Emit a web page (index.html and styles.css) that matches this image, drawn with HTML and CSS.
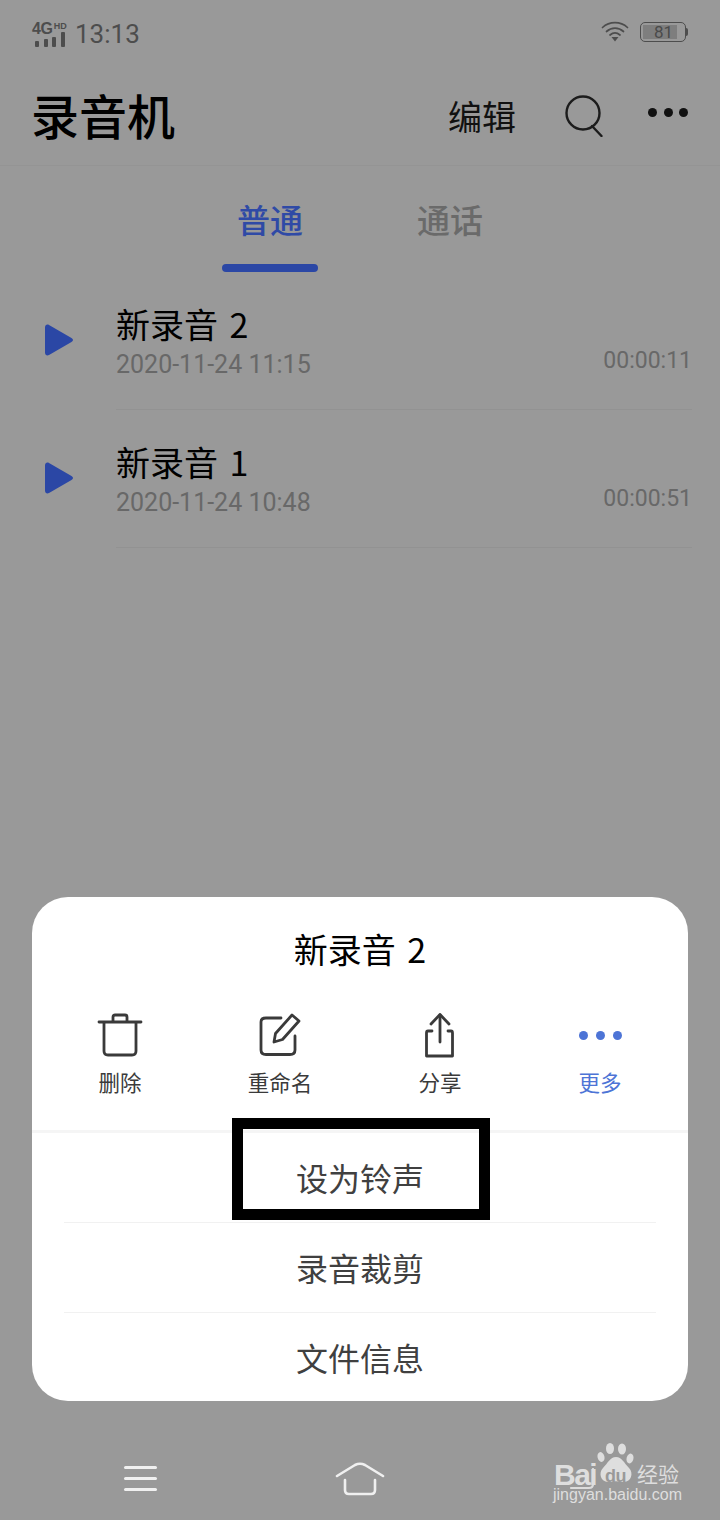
FILE: index.html
```html
<!DOCTYPE html>
<html lang="zh">
<head>
<meta charset="utf-8">
<title>录音机</title>
<link rel="stylesheet" href="styles.css">
</head>
<body>
<div class="screen">
  <div class="status">
    <div class="status-left">
      <div class="signal">
        <div class="net"><span class="net-4g">4G</span><span class="net-hd">HD</span></div>
        <div class="bars"><i class="b1"></i><i class="b2"></i><i class="b3"></i><i class="b4"></i></div>
      </div>
      <span class="time">13:13</span>
    </div>
    <div class="status-right">
      <svg class="wifi" width="28" height="21" viewBox="0 0 28 21" fill="none" stroke="#4d4d4d" stroke-width="1.700" stroke-linecap="round">
        <path d="M1.500 6.500C8.500 0 19.500 0 26.500 6.500"/>
        <path d="M5.500 10.500C10.500 6 17.500 6 22.500 10.500"/>
        <path d="M9 14C12 11.500 16 11.500 19 14"/>
        <path d="M10.500 16H17.500L14 20.500Z" fill="#4d4d4d" stroke="none"/>
      </svg>
      <div class="battery"><div class="battery-body"><span class="battery-fill">81</span></div><i class="battery-tip"></i></div>
    </div>
  </div>

  <header class="appbar">
    <h1 class="app-title">录音机</h1>
    <div class="actions">
      <span class="edit">编辑</span>
      <svg class="search" width="42" height="42" viewBox="0 0 42 42" fill="none" stroke="#1c1c1c" stroke-width="2.400" stroke-linecap="round">
        <circle cx="19" cy="18" r="16.500"/>
        <path d="M28 31L37.500 41"/>
      </svg>
      <div class="dots"><i></i><i></i><i></i></div>
    </div>
  </header>

  <nav class="tabs">
    <div class="tab tab-active"><span>普通</span><i class="underline"></i></div>
    <div class="tab"><span>通话</span></div>
  </nav>

  <ul class="list">
    <li class="row">
      <svg class="play" width="30" height="32" viewBox="0 0 30 32"><path d="M1 3.500C1 1 3 0 5 1L27.500 14C29.500 15 29.500 17 27.500 18L5 31C3 32 1 31 1 28.500Z" fill="#2b47a5"/></svg>
      <div class="row-main">
        <div class="row-text">
          <div class="row-name">新录音 2</div>
          <div class="row-date">2020-11-24 11:15</div>
        </div>
        <div class="row-dur">00:00:11</div>
      </div>
    </li>
    <li class="row">
      <svg class="play" width="30" height="32" viewBox="0 0 30 32"><path d="M1 3.500C1 1 3 0 5 1L27.500 14C29.500 15 29.500 17 27.500 18L5 31C3 32 1 31 1 28.500Z" fill="#2b47a5"/></svg>
      <div class="row-main">
        <div class="row-text">
          <div class="row-name">新录音 1</div>
          <div class="row-date">2020-11-24 10:48</div>
        </div>
        <div class="row-dur">00:00:51</div>
      </div>
    </li>
  </ul>

  <section class="sheet">
    <div class="sheet-title">新录音 2</div>
    <div class="sheet-actions">
      <div class="action">
        <svg width="46" height="44" viewBox="0 0 46 44" fill="none" stroke="#3a3a3a" stroke-width="2.800" stroke-linecap="round" stroke-linejoin="round">
          <path d="M2 9H44"/>
          <path d="M16 8V4C16 2.500 17 2 18 2H28C29 2 30 2.500 30 4V8"/>
          <path d="M7 10V38C7 41 8.500 42 11 42H35C37.500 42 39 41 39 38V10"/>
        </svg>
        <span>删除</span>
      </div>
      <div class="action">
        <svg width="46" height="44" viewBox="0 0 46 44" fill="none" stroke="#3a3a3a" stroke-width="2.800" stroke-linecap="round" stroke-linejoin="round">
          <path d="M24 5H9C5.500 5 4 7 4 9V37C4 40 5.500 41.500 9 41.500H33C36.500 41.500 38 40 38 37V23"/>
          <path d="M17 29L18.500 20.500L35 2L42 8L25.500 26.500Z"/>
        </svg>
        <span>重命名</span>
      </div>
      <div class="action">
        <svg width="46" height="46" viewBox="0 0 46 46" fill="none" stroke="#3a3a3a" stroke-width="2.800" stroke-linecap="round" stroke-linejoin="round">
          <path d="M23 3V30"/>
          <path d="M14 12L23 2.500L32 12"/>
          <path d="M15 19H11C10 19 9.500 19.500 9.500 21V44H35.500V21C35.500 19.500 35 19 34 19H31"/>
        </svg>
        <span>分享</span>
      </div>
      <div class="action action-more">
        <div class="more-dots"><i></i><i></i><i></i></div>
        <span>更多</span>
      </div>
    </div>
    <div class="menu">
      <div class="menu-item">设为铃声</div>
      <div class="menu-item">录音裁剪</div>
      <div class="menu-item">文件信息</div>
    </div>
  </section>

  <footer class="navbar">
    <div class="menu-icon"><i></i><i></i><i></i></div>
    <svg class="home-icon" width="50" height="34" viewBox="0 0 50 34" fill="none" stroke="#f0f0f0" stroke-width="2.600" stroke-linecap="round" stroke-linejoin="round">
      <path d="M2 14L20 3C23 1.500 27 1.500 30 3L48 14"/>
      <path d="M10 18V28C10 31 11.500 32 14 32H36C38.500 32 40 31 40 28V18"/>
    </svg>
    <svg class="back-icon" width="26" height="22" viewBox="0 0 26 22" fill="none" stroke="#dcdcdc" stroke-width="2.200" stroke-linecap="round">
      <path d="M24 1V16C24 19 22.500 20 20 20H2"/>
    </svg>
  </footer>

  <div class="highlight" aria-hidden="true"></div>

  <div class="watermark">
    <svg class="paw" width="38" height="40" viewBox="0 0 38 40" fill="#dedede">
      <ellipse cx="4" cy="14" rx="3.400" ry="5" transform="rotate(-15 4 14)"/>
      <ellipse cx="13" cy="5.500" rx="4" ry="5.500"/>
      <ellipse cx="25" cy="6" rx="4" ry="5.500"/>
      <ellipse cx="33" cy="15.500" rx="3.400" ry="5" transform="rotate(15 33 15.500)"/>
      <path d="M19 14C13 14 11 20 6 25C1 30 4 39 11 39C14 39 16 38.200 19 38.200C22 38.200 24 39 27 39C34 39 37 30 32 25C27 20 25 14 19 14Z"/>
    </svg>
    <span class="wm-bai">Bai</span>
    <span class="wm-du">du</span>
    <span class="wm-jy">经验</span>
    <span class="wm-url">jingyan.baidu.com</span>
  </div>
</div>
</body>
</html>
```

FILE: styles.css
```css
* { box-sizing: border-box; }
html, body { margin: 0; padding: 0; }
body {
  width: 720px;
  height: 1520px;
  overflow: hidden;
  font-family: "Noto Sans CJK SC", "Noto Sans", sans-serif;
  background: #999999;
}
i { display: block; }
.screen {
  position: relative;
  width: 720px;
  height: 1520px;
  display: flex;
  flex-direction: column;
  background: #999999;
}

/* status bar */
.status {
  height: 66px;
  padding: 18px 32px 0 32px;
  display: flex;
  justify-content: space-between;
  align-items: flex-start;
}
.status-left { display: flex; align-items: center; gap: 10px; }
.signal { width: 33px; display: flex; flex-direction: column; }
.net { display: flex; height: 12px; align-items: flex-start; font-family: "Liberation Sans", sans-serif; font-weight: 700; color: #4d4d4d; }
.net-4g { font-size: 16px; line-height: 14px; letter-spacing: -0.3px; }
.net-hd { font-size: 9px; line-height: 9px; margin-left: 1px; }
.bars { display: flex; align-items: flex-end; gap: 4.500px; height: 13px; padding-left: 3px; }
.bars i { width: 4px; background: #4d4d4d; border-radius: 1px; }
.b1 { height: 6px; }
.b2 { height: 8px; }
.b3 { height: 10px; }
.b4 { height: 15px; }
.time { font-family: "Roboto", sans-serif; font-size: 26px; line-height: 32px; color: #4d4d4d; }
.status-right { display: flex; align-items: center; gap: 11px; padding-top: 3px; }
.wifi { display: block; }
.battery { display: flex; align-items: center; }
.battery-body { width: 46px; height: 20px; border: 1.200px solid #4d4d4d; border-radius: 5px; padding: 2px; display: flex; }
.battery-fill { width: 34px; padding-left: 11px; background: #7e7e7e; font-family: "Roboto", sans-serif; font-size: 17px; line-height: 15px; color: #4a4a4a; }
.battery-tip { width: 2px; height: 8px; background: #4d4d4d; border-radius: 0 2px 2px 0; }

/* app bar */
.appbar {
  height: 100px;
  padding: 0 32px 0 31px;
  display: flex;
  justify-content: space-between;
  align-items: flex-start;
  border-bottom: 1px solid #949494;
}
.app-title { margin: 15px 0 0; font-size: 48px; line-height: 66px; font-weight: 500; color: #000; }
.actions { display: flex; align-items: flex-start; }
.edit { margin-top: 26px; font-size: 34px; line-height: 48px; color: #111; }
.search { margin: 29px 0 0 48px; }
.dots { margin: 42px 0 0 42px; display: flex; gap: 6.500px; }
.dots i { width: 9px; height: 9px; border-radius: 50%; background: #111; }

/* tabs */
.tabs { height: 106px; display: flex; justify-content: center; gap: 84px; }
.tab { width: 96px; display: flex; flex-direction: column; align-items: center; font-size: 33px; line-height: 46px; color: #6a6a6a; font-weight: 500; padding-top: 30px; }
.tab-active { color: #2f4aa6; }
.underline { width: 96px; height: 8px; margin-top: 22px; border-radius: 4px; background: #2b47a5; }

/* list */
.list { list-style: none; margin: 0; padding: 0 28px 0 44px; }
.row { display: flex; align-items: flex-start; height: 138px; }
.play { margin-top: 52px; flex: none; }
.row-main {
  flex: 1;
  margin-left: 42px;
  height: 138px;
  display: flex;
  justify-content: space-between;
  border-bottom: 1px solid #929292;
}
.row-text { padding-top: 29px; }
.row-name { font-size: 34px; line-height: 46px; color: #000; word-spacing: 4px; }
.row-date { font-family: "Roboto", sans-serif; font-size: 25px; line-height: 30px; color: #686868; margin-top: 3px; }
.row-dur { padding-top: 74px; font-family: "Roboto", sans-serif; font-size: 23px; line-height: 30px; color: #686868; }

/* sheet */
.sheet {
  margin: 349px 32px 0;
  height: 504px;
  border-radius: 36px;
  background: #fff;
  overflow: hidden;
  flex: none;
}
.sheet-title { padding-top: 28px; text-align: center; font-size: 34px; line-height: 48px; color: #000; word-spacing: 4px; }
.sheet-actions {
  height: 160px;
  padding-top: 38px;
  display: grid;
  grid-template-columns: repeat(4, 160px);
  justify-content: center;
  border-bottom: 3px solid #f5f5f5;
}
.action { display: flex; flex-direction: column; align-items: center; color: #3a3a3a; font-size: 21.500px; line-height: 32px; }
.action svg { display: block; height: 48px; }
.action span { margin-top: 7px; }
.action-more { color: #4d74d6; }
.more-dots { height: 48px; display: flex; align-items: center; gap: 8px; }
.more-dots i { width: 9px; height: 9px; border-radius: 50%; background: #4d74d6; }
.menu { padding: 0 32px; }
.menu-item {
  height: 90px;
  display: flex;
  align-items: center;
  justify-content: center;
  font-size: 32px;
  color: #404040;
  border-bottom: 1px solid #f1f1f1;
  padding-bottom: 2px;
}
.menu-item:last-child { border-bottom: 0; }

/* nav bar */
.navbar { position: relative; flex: 1; display: block; }
.menu-icon { position: absolute; left: 124px; top: 65px; width: 33px; display: flex; flex-direction: column; gap: 8px; }
.menu-icon i { height: 3px; border-radius: 2px; background: #f0f0f0; }
.home-icon { position: absolute; left: 335px; top: 61px; }
.back-icon { position: absolute; left: 569px; top: 67px; }

/* annotation box */
.highlight {
  position: absolute;
  left: 232px;
  top: 1118px;
  width: 258px;
  height: 102px;
  border: 11px solid #000;
}

/* watermark */
.watermark { position: absolute; left: 553px; top: 1443px; width: 130px; height: 64px; color: #dedede; font-family: "Liberation Sans", sans-serif; }
.paw { position: absolute; left: 44px; top: 0; }
.wm-bai { position: absolute; left: 1px; top: 20px; font-weight: 700; font-size: 30px; line-height: 24px; letter-spacing: -1.500px; }
.wm-du { position: absolute; left: 52px; top: 25px; font-weight: 700; font-size: 18px; line-height: 16px; letter-spacing: -0.5px; color: #999999; }
.wm-jy { position: absolute; left: 84px; top: 18px; font-family: "Noto Sans CJK SC", sans-serif; font-size: 21px; line-height: 24px; white-space: nowrap; }
.wm-url { position: absolute; left: 0; top: 45px; font-size: 16px; line-height: 14px; white-space: nowrap; }
```
